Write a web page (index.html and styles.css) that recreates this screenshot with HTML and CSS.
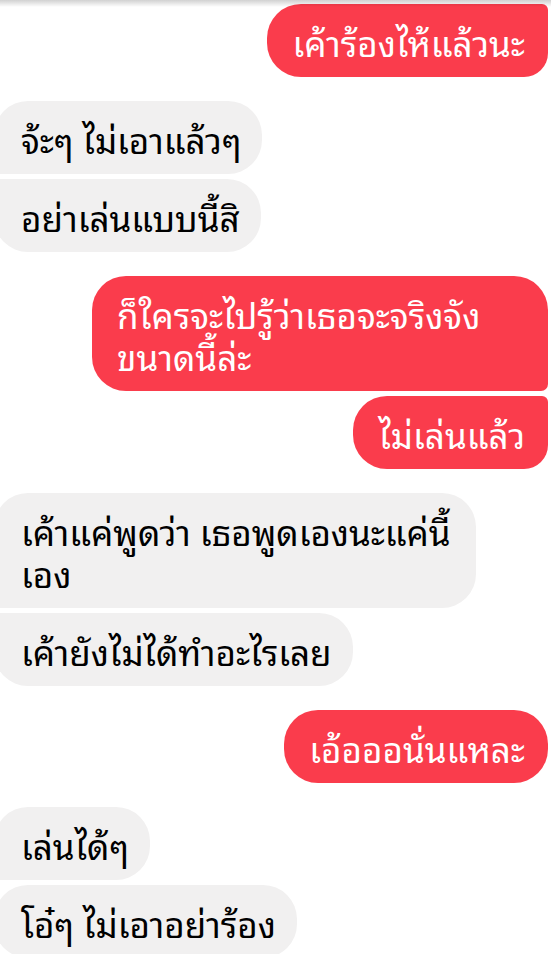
FILE: index.html
```html
<!DOCTYPE html>
<html lang="th">
<head>
    <meta charset="UTF-8">
    <meta name="viewport" content="width=device-width, initial-scale=1">
    <title>Chat</title>
    <link rel="stylesheet" href="styles.css">
</head>
<body>
    <div class="top-shade"></div>
    <div class="chat">
        <div class="group sent">
            <div class="bubble last">เค้าร้องไห้แล้วนะ</div>
        </div>

        <div class="group received">
            <div class="bubble first">จ้ะๆ ไม่เอาแล้วๆ</div>
            <div class="bubble last">อย่าเล่นแบบนี้สิ</div>
        </div>

        <div class="group sent">
            <div class="bubble first wide-sent">ก็ใครจะไปรู้ว่าเธอจะจริงจัง<br>ขนาดนี้ล่ะ</div>
            <div class="bubble last">ไม่เล่นแล้ว</div>
        </div>

        <div class="group received">
            <div class="bubble first wide-received">เค้าแค่พูดว่า เธอพูดเองนะแค่นี้<br>เอง</div>
            <div class="bubble last">เค้ายังไม่ได้ทำอะไรเลย</div>
        </div>

        <div class="group sent">
            <div class="bubble">เอ้อออนั่นแหละ</div>
        </div>

        <div class="group received">
            <div class="bubble first">เล่นได้ๆ</div>
            <div class="bubble">โอ๋ๆ ไม่เอาอย่าร้อง</div>
        </div>
    </div>
</body>
</html>
```

FILE: styles.css
```css
* {
    margin: 0;
    padding: 0;
    box-sizing: border-box;
}
html, body {
    height: 100%;
    overflow: hidden;
}
body {
    font-family: "Noto Sans Thai Looped", "Waree", "Loma", "Garuda", "Noto Sans Thai", "Noto Sans", sans-serif;
    background-color: #fff;
    position: relative;
}
.top-shade {
    position: absolute;
    top: 0;
    left: 0;
    right: 0;
    height: 7px;
    background: linear-gradient(rgba(0, 0, 0, 0.18), rgba(0, 0, 0, 0));
}
.chat {
    display: flex;
    flex-direction: column;
    gap: 24px;
    padding-top: 4px;
}
.group {
    display: flex;
    flex-direction: column;
    gap: 5px;
}
.bubble {
    font-size: 35px;
    line-height: 42px;
    padding: 15.5px 23px;
    border-radius: 34px;
    white-space: nowrap;
}
.sent {
    align-items: flex-end;
    padding-right: 3px;
}
.sent .bubble {
    background: #fa3c4c;
    color: #fff;
    padding-left: 25px;
}
.sent .first {
    border-bottom-right-radius: 7px;
}
.sent .last {
    border-top-right-radius: 6px;
    border-bottom-right-radius: 24px;
}
.received {
    align-items: flex-start;
    margin-left: -6px;
}
.received .bubble {
    background: #f1f0f0;
    color: #000;
    padding-left: 27px;
    padding-right: 21px;
}
.received .first {
    border-bottom-left-radius: 7px;
}
.received .last {
    border-top-left-radius: 7px;
}
.wide-sent {
    width: 456px;
}
.wide-received {
    width: 482px;
}
```
